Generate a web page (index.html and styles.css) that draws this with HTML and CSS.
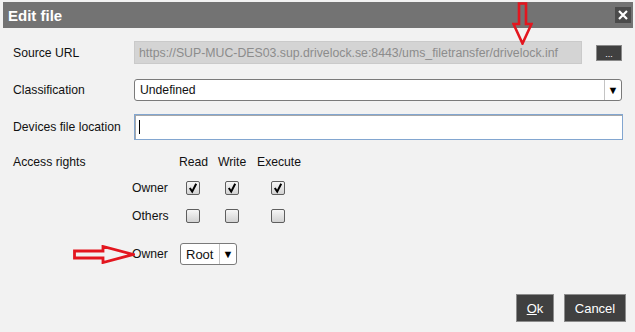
FILE: index.html
```html
<!DOCTYPE html>
<html lang="en">
<head>
    <meta charset="UTF-8">
    <title>Edit file</title>
    <link rel="stylesheet" href="styles.css">
</head>
<body>

    <div class="dialog">
        <div class="titlebar">
            <span class="title">Edit file</span>
            <span class="close">
                <svg width="16" height="16" viewBox="0 0 16 16"><path d="M4 4 L12 12 M12 4 L4 12" stroke="#fff" stroke-width="2.2" fill="none"/></svg>
            </span>
        </div>

        <div class="form">
            <div class="row row-source">
                <span class="label">Source URL</span>
                <div class="field disabled">https://SUP-MUC-DES03.sup.drivelock.se:8443/ums_filetransfer/drivelock.inf</div>
                <span class="browse">...</span>
            </div>

            <div class="row row-class">
                <span class="label">Classification</span>
                <div class="select wide">
                    <span class="value">Undefined</span>
                    <span class="arrow">&#9660;</span>
                </div>
            </div>

            <div class="row row-devices">
                <span class="label">Devices file location</span>
                <div class="field focused"><span class="caret"></span></div>
            </div>

            <div class="rights">
                <span class="label">Access rights</span>
                <span></span>
                <span class="head">Read</span>
                <span class="head">Write</span>
                <span class="head">Execute</span>

                <span></span>
                <span class="who">Owner</span>
                <span class="cb checked"><svg width="12" height="12" viewBox="0 0 12 12"><path d="M2.8 6 L5.2 9.6 L9.2 1.8" stroke="#000" stroke-width="2" fill="none"/></svg></span>
                <span class="cb checked"><svg width="12" height="12" viewBox="0 0 12 12"><path d="M2.8 6 L5.2 9.6 L9.2 1.8" stroke="#000" stroke-width="2" fill="none"/></svg></span>
                <span class="cb checked"><svg width="12" height="12" viewBox="0 0 12 12"><path d="M2.8 6 L5.2 9.6 L9.2 1.8" stroke="#000" stroke-width="2" fill="none"/></svg></span>

                <span></span>
                <span class="who">Others</span>
                <span class="cb"></span>
                <span class="cb"></span>
                <span class="cb"></span>
            </div>

            <div class="row row-owner">
                <span class="who owner-label">Owner</span>
                <div class="select small">
                    <span class="value">Root</span>
                    <span class="arrow">&#9660;</span>
                </div>
            </div>
        </div>

        <div class="actions">
            <span class="btn ok"><u>O</u>k</span>
            <span class="btn cancel">Cancel</span>
        </div>
    </div>

    <!-- red annotation arrows drawn over the dialog -->
    <svg class="mark mark-down" width="21" height="43" viewBox="0 0 21 43">
        <path d="M7 1.5 L14 1.5 L14 22 L19.5 22 L10.5 41.5 L1.5 22 L7 22 Z" stroke="#e3161f" stroke-width="2.6" fill="none" stroke-linejoin="miter"/>
    </svg>
    <svg class="mark mark-right" width="62" height="19" viewBox="0 0 62 19">
        <path d="M1.5 6 L30 6 L30 1.5 L60 9.5 L30 17.5 L30 13 L1.5 13 Z" stroke="#e3161f" stroke-width="2.8" fill="none" stroke-linejoin="miter"/>
    </svg>

</body>
</html>
```

FILE: styles.css
```css
body {
    margin: 0;
    background-color: #f2f2f2;
    font-family: 'Liberation Sans', Arial, sans-serif;
    font-size: 12.2px;
    color: #111;
    position: relative;
    height: 332px;
    overflow: hidden;
}

.dialog {
    padding-top: 2px;
}

.titlebar {
    margin: 0 2px 0 3px;
    height: 26px;
    background-color: #737373;
    display: flex;
    align-items: center;
    justify-content: space-between;
    padding: 0 2px 0 5px;
}

.title {
    color: #fff;
    font-weight: bold;
    font-size: 15px;
}

.close {
    width: 16px;
    height: 16px;
    background-color: #4b4b4b;
    display: flex;
}

.form {
    padding: 0 12px 0 13px;
}

.row {
    display: flex;
    align-items: center;
}

.label {
    width: 121px;
    flex-shrink: 0;
}

.row-source {
    margin-top: 13px;
    height: 23px;
}

.field {
    height: 100%;
    box-sizing: border-box;
    display: flex;
    align-items: center;
}

.field.disabled {
    width: 448px;
    background-color: #d4d4d4;
    border: 1px solid #cacaca;
    color: #8c8c8c;
    padding-left: 4px;
    font-size: 12.3px;
}

.browse {
    margin-left: 14px;
    width: 26px;
    height: 16px;
    box-sizing: border-box;
    background-color: #404040;
    border: 1px solid #8a8a8a;
    color: #fff;
    font-size: 9px;
    line-height: 17px;
    text-align: center;
}

.row-class {
    margin-top: 15px;
    height: 22px;
}

.select {
    height: 100%;
    box-sizing: border-box;
    display: flex;
    align-items: center;
    background-color: #fff;
    border: 1px solid #7a7a7a;
    border-radius: 3px;
}

.select.wide {
    flex: 1;
    margin-right: 1px;
}

.select .value {
    flex: 1;
    padding-left: 5px;
}

.select .arrow {
    width: 16px;
    height: 100%;
    border-left: 1px solid #c4c4c4;
    display: flex;
    align-items: center;
    justify-content: center;
    font-size: 11px;
    color: #000;
}

.row-devices {
    margin-top: 13px;
    height: 26px;
}

.field.focused {
    flex: 1;
    background-color: #fff;
    border: 1px solid #82a6d0;
    box-shadow: inset 0 1px 0 #a8a8a8, inset 1px 0 0 #a8a8a8;
    padding-left: 4px;
}

.caret {
    width: 1px;
    height: 14px;
    background-color: #000;
}

.rights {
    margin-top: 10px;
    display: grid;
    grid-template-columns: 108px 36px 28px 28px 42px;
    grid-template-rows: 24px 28px 28px;
    column-gap: 11px;
    align-items: center;
}

.rights .label {
    width: auto;
}

.head {
    text-align: center;
}

.cb {
    justify-self: center;
    width: 14px;
    height: 14px;
    box-sizing: border-box;
    border: 1px solid #5e5e5e;
    border-radius: 2px;
    background: linear-gradient(#f6f6f6, #d2d2d2);
    display: flex;
    align-items: center;
    justify-content: center;
}

.row-owner {
    margin-top: 13px;
    height: 22px;
}

.owner-label {
    margin-left: 119px;
    width: 48px;
}

.select.small {
    width: 57px;
}

.select.small .value {
    font-size: 13px;
}

.actions {
    margin-top: 29px;
    padding-right: 9px;
    display: flex;
    justify-content: flex-end;
    gap: 10px;
}

.btn {
    height: 28px;
    box-sizing: border-box;
    background-color: #404040;
    border: 1px solid #8c8c8c;
    color: #fff;
    font-size: 13px;
    display: flex;
    align-items: center;
    justify-content: center;
}

.btn.ok {
    width: 38px;
}

.btn.cancel {
    width: 62px;
}

.mark {
    position: absolute;
}

.mark-down {
    left: 512px;
    top: 2px;
}

.mark-right {
    left: 73px;
    top: 245px;
}
```
